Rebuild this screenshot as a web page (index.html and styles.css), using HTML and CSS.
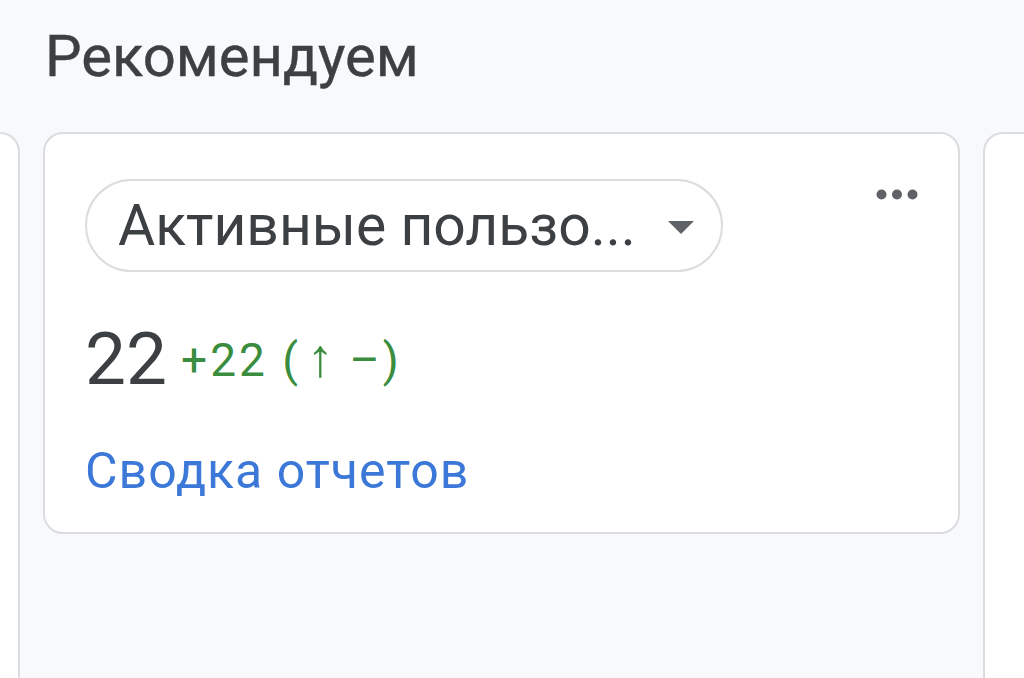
FILE: index.html
```html
<!DOCTYPE html>
<html lang="ru">
<head>
<meta charset="utf-8">
<title>Рекомендуем</title>
<link rel="stylesheet" href="styles.css">
</head>
<body>
<h1 class="section-title">Рекомендуем</h1>
<div class="carousel">
  <div class="card card-side card-prev"></div>
  <div class="card card-main">
    <div class="card-header">
      <div class="metric-select">
        <span class="metric-select-label">Активные пользо...</span>
        <svg class="metric-select-arrow" width="26" height="13" viewBox="0 0 26 13"><path d="M0 0 L26 0 L13 13 Z" fill="#5f6368"/></svg>
      </div>
      <svg class="kebab" width="42" height="11" viewBox="0 0 42 11"><circle cx="5.5" cy="5.5" r="5" fill="#5f6368"/><circle cx="21" cy="5.5" r="5" fill="#5f6368"/><circle cx="36.5" cy="5.5" r="5" fill="#5f6368"/></svg>
    </div>
    <div class="metric-row">
      <span class="metric-value">22</span>
      <span class="metric-delta">+22 (<span class="arrow">↑</span>&nbsp;–)</span>
    </div>
    <a class="card-link" href="#">Сводка отчетов</a>
  </div>
  <div class="card card-side card-next"></div>
</div>
</body>
</html>
```

FILE: styles.css
```css
html, body {
  margin: 0;
  padding: 0;
  background: #f8f9fa;
  overflow: hidden;
  height: 100%;
}
body {
  font-family: Roboto, "Noto Sans", sans-serif;
  color: #3c4043;
}
.section-title {
  margin: 0;
  padding: 27px 0 0 45px;
  font-size: 58px;
  line-height: 58px;
  font-weight: 400;
  color: #3c4043;
  -webkit-text-stroke: 0.4px #3c4043;
}
.carousel {
  margin-top: 47px;
  display: grid;
  grid-template-columns: 20px 917px 1fr;
  column-gap: 23px;
  align-items: start;
}
.card {
  box-sizing: border-box;
  background: #fff;
  border: 2px solid #dadce0;
}
.card-side {
  height: 700px;
}
.card-prev {
  border-left: none;
  border-radius: 0 20px 20px 0;
}
.card-next {
  border-right: none;
  border-radius: 20px 0 0 20px;
}
.card-main {
  height: 402px;
  border-radius: 20px;
  padding: 45px 40px 0 40px;
  display: flex;
  flex-direction: column;
  align-items: flex-start;
}
.card-header {
  align-self: stretch;
  display: flex;
  justify-content: space-between;
  align-items: flex-start;
}
.metric-select {
  box-sizing: border-box;
  width: 638px;
  height: 93px;
  border: 2px solid #dadce0;
  border-radius: 47px;
  padding: 0 27px 0 31px;
  display: flex;
  align-items: center;
  justify-content: space-between;
}
.metric-select-label {
  font-size: 57px;
  line-height: 57px;
  color: #3c4043;
  white-space: nowrap;
}
.metric-select-arrow {
  display: block;
  margin-top: 4px;
}
.kebab {
  display: block;
  margin-top: 10px;
}
.metric-row {
  margin-top: 51px;
  display: flex;
  align-items: center;
  gap: 14px;
}
.metric-value {
  font-size: 73px;
  line-height: 73px;
  color: #3c4043;
}
.metric-delta {
  font-size: 46px;
  line-height: 46px;
  letter-spacing: 3px;
  color: #3a8d3e;
}
.metric-delta .arrow {
  font-size: 54px;
  line-height: 0;
  letter-spacing: 0;
  margin: 0 1px 0 6px;
}
.card-link {
  margin-top: 50px;
  font-size: 50px;
  line-height: 50px;
  letter-spacing: 1px;
  color: #3c78d8;
  text-decoration: none;
}
```
